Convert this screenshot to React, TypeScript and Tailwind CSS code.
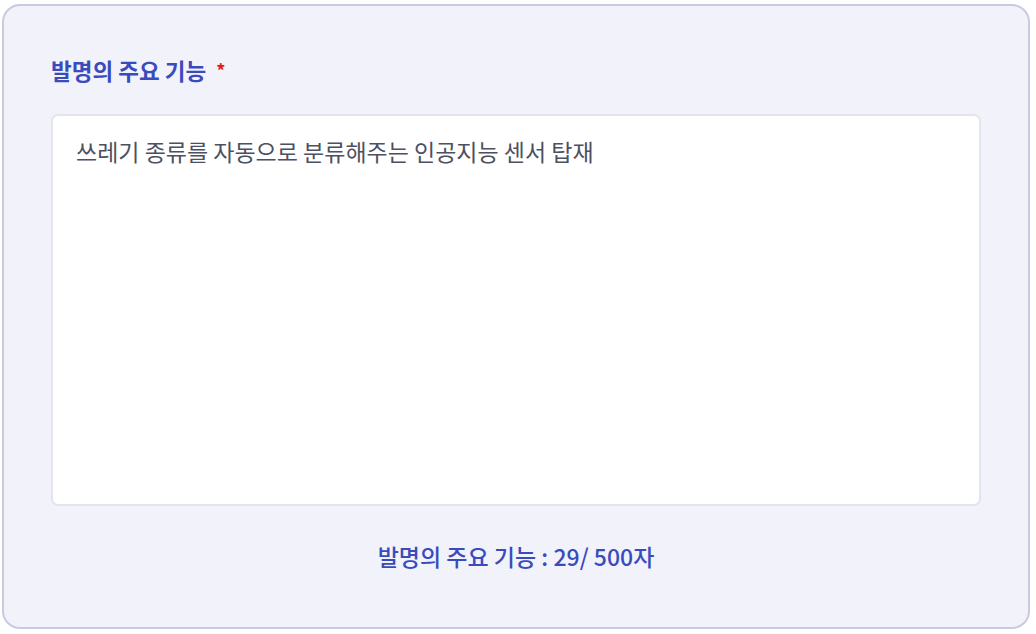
import { useState } from "react";

const MAX_LENGTH = 500;

function App() {
  const [feature, setFeature] = useState(
    "쓰레기 종류를 자동으로 분류해주는 인공지능 센서 탑재"
  );

  return (
    <div
      className="w-[1036px] h-[634px] bg-white pt-[4px] pl-[2px]"
      style={{ fontFamily: '"Noto Sans CJK KR", "Noto Sans", sans-serif' }}
    >
      <div className="w-[1028px] h-[625px] rounded-[18px] border-2 border-[#c9cadf] bg-[#f1f2fa] flex flex-col px-[47px] pt-[44px]">
        <label className="flex items-center gap-[10px] text-[22.5px] font-bold text-[#3a4bbd] leading-[40px]">
          발명의 주요 기능
          <span className="text-[#e01b1b] text-[18px]">*</span>
        </label>
        <textarea
          value={feature}
          maxLength={MAX_LENGTH}
          onChange={(e) => setFeature(e.target.value)}
          className="mt-[24px] h-[392px] w-full resize-none rounded-[7px] border-2 border-[#e3e4ec] bg-white px-[23px] py-[18px] text-[23px] leading-[34px] text-[#4d5060] outline-none"
        />
        <p className="mt-[33px] text-center text-[23px] leading-[34px] font-medium text-[#3a4bbd]">
          발명의 주요 기능 : {feature.length}/ {MAX_LENGTH}자
        </p>
      </div>
    </div>
  );
}

export default App;
